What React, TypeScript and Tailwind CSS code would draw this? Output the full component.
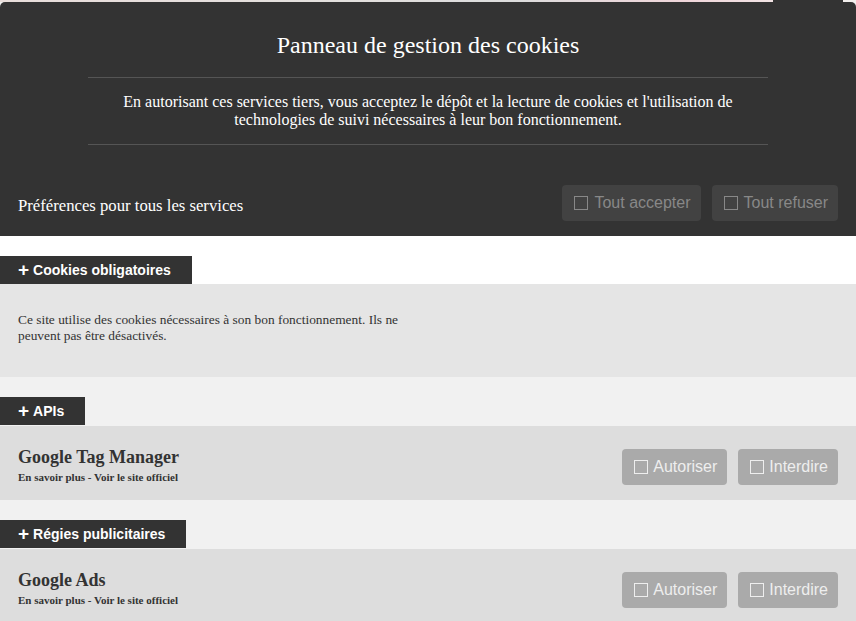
import React from "react";

const serif = { fontFamily: '"Liberation Serif", "Times New Roman", serif' };
const sans = { fontFamily: '"Liberation Sans", Arial, sans-serif' };

function Box({ dark }: { dark?: boolean }) {
  return (
    <span
      className={
        "inline-block w-[14px] h-[14px] border-[1.5px] " +
        (dark ? "border-[#888]" : "border-[#eee]")
      }
    />
  );
}

function DarkBtn({ label }: { label: string }) {
  return (
    <button
      className="h-[36px] flex items-center gap-[6px] pl-[12px] pr-[10px] rounded-[4px] bg-[#424242] text-[#888] text-[16px]"
      style={sans}
    >
      <Box dark />
      <span>{label}</span>
    </button>
  );
}

function LightBtn({ label }: { label: string }) {
  return (
    <button
      className="h-[36px] flex items-center gap-[5px] pl-[12px] pr-[10px] rounded-[4px] bg-[#aaaaaa] text-[#eeeeee] text-[16px]"
      style={sans}
    >
      <Box />
      <span>{label}</span>
    </button>
  );
}

function Tab({ label }: { label: string }) {
  return (
    <div
      className="inline-flex items-center h-[28px] bg-[#333] text-white font-bold text-[14px] pl-[18px] pr-[21px]"
      style={sans}
    >
      <span className="mr-[4px] text-[19px] leading-none -mt-[1px]">+</span>
      {label}
    </div>
  );
}

function ServiceRow({ name }: { name: string }) {
  return (
    <div className="bg-[#dddddd] h-[74px] flex items-center justify-between pl-[18px] pr-[18px]">
      <div className="flex flex-col mt-[4px]" style={serif}>
        <div className="text-[18px] font-bold text-[#333] leading-[22px]">{name}</div>
        <div className="text-[11px] font-bold text-[#333] leading-[14px] mt-[2px]">
          En savoir plus - Voir le site officiel
        </div>
      </div>
      <div className="flex gap-[11px] mt-[7px]">
        <LightBtn label="Autoriser" />
        <LightBtn label="Interdire" />
      </div>
    </div>
  );
}

export default function App() {
  return (
    <div className="relative w-[856px] h-[621px] overflow-hidden bg-[#f1f1f1]">
      <div className="h-[2px] bg-[linear-gradient(90deg,#e9dedb_0%,#e3e0de_40%,#dcdcdc_60%,#f0d6da_80%,#f3f0ee_100%)]" />
      <div className="absolute top-0 left-[773px] w-[70px] h-[4px] bg-[#333]" />
      <div className="bg-[#333] rounded-t-[5px] pt-[29px] pb-[15px]">
        <div className="text-white text-[24px] leading-[28px] text-center" style={serif}>
          Panneau de gestion des cookies
        </div>
        <div className="mx-[88px] mt-[18px] border-t border-[#555]" />
        <div className="mt-[15px] text-white text-[16px] leading-[18px] text-center px-[110px]" style={serif}>
          En autorisant ces services tiers, vous acceptez le dépôt et la lecture de cookies et l'utilisation de technologies de suivi nécessaires à leur bon fonctionnement.
        </div>
        <div className="mx-[88px] mt-[15px] border-t border-[#555]" />
        <div className="mt-[40px] flex items-center justify-between pl-[18px] pr-[18px]">
          <div className="text-white text-[16.7px] mt-[5px]" style={serif}>
            Préférences pour tous les services
          </div>
          <div className="flex gap-[11px]">
            <DarkBtn label="Tout accepter" />
            <DarkBtn label="Tout refuser" />
          </div>
        </div>
      </div>
      <div className="bg-white pt-[20px]">
        <Tab label="Cookies obligatoires" />
      </div>
      <div className="bg-[#e5e5e5] h-[93px] pt-[28px] pl-[18px]">
        <div className="w-[420px] text-[13.4px] leading-[16px] text-[#333]" style={serif}>
          Ce site utilise des cookies nécessaires à son bon fonctionnement. Ils ne peuvent pas être désactivés.
        </div>
      </div>
      <div className="pt-[20px]">
        <div className="h-[29px] flex">
          <Tab label="APIs" />
        </div>
      </div>
      <ServiceRow name="Google Tag Manager" />
      <div className="pt-[20px]">
        <div className="h-[29px] flex">
          <Tab label="Régies publicitaires" />
        </div>
      </div>
      <ServiceRow name="Google Ads" />
    </div>
  );
}
